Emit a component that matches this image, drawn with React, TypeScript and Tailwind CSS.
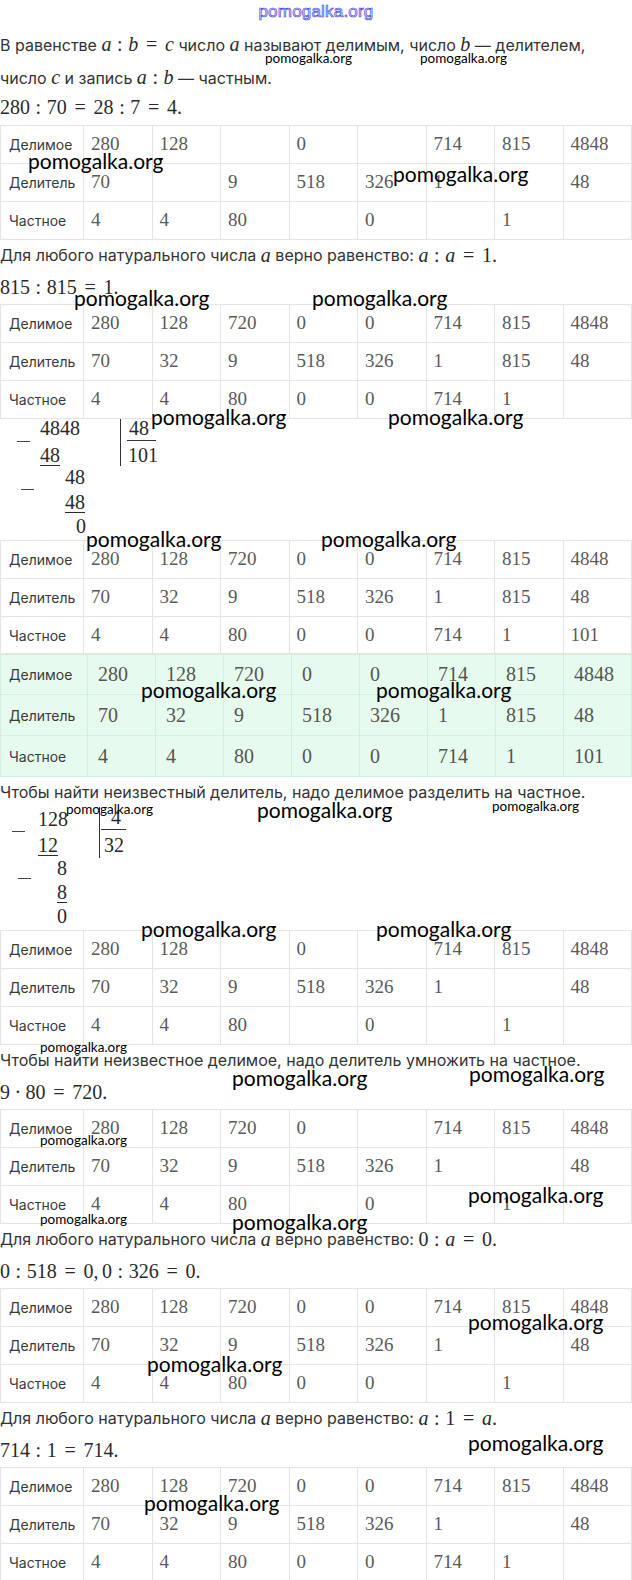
import React, { Fragment } from "react";

type Cell = string | null;

const LABELS = ["Делимое", "Делитель", "Частное"];

function Eq({ children }: { children: React.ReactNode }) {
  return (
    <span className="font-['Liberation_Serif',serif] text-[20px] text-[#2a2a2a] whitespace-nowrap">
      {children}
    </span>
  );
}

function V({ children }: { children: React.ReactNode }) {
  return <i className="italic">{children}</i>;
}

function Colon() {
  return <span className="inline-block mx-[0.28em]">:</span>;
}

function Equals() {
  return <span className="inline-block mx-[0.28em] w-[0.78em] text-center">=</span>;
}

function DataTable({ rows, green }: { rows: Cell[][]; green?: boolean }) {
  if (green) {
    return (
      <div className="-mt-[2px] grid grid-cols-[87px_repeat(8,minmax(0,1fr))] border-t border-l border-[#d4efdf] bg-[#e6fbee]">
        {rows.map((row, i) => (
          <Fragment key={i}>
            <div className="h-[41px] border-r border-b border-[#d4efdf] flex items-center pl-[8px] font-['Inter',sans-serif] text-[14px] text-[#3a3a3a]">
              {LABELS[i]}
            </div>
            {row.map((v, j) => (
              <div
                key={j}
                className="h-[41px] border-r border-b border-[#d4efdf] flex items-center pl-[10px] font-['Liberation_Serif',serif] text-[20px] text-[#555]"
              >
                {v}
              </div>
            ))}
          </Fragment>
        ))}
      </div>
    );
  }
  return (
    <div className="grid grid-cols-[83px_repeat(8,minmax(0,1fr))] border-t border-l border-[#e4e4e4]">
      {rows.map((row, i) => (
        <Fragment key={i}>
          <div className="h-[38px] border-r border-b border-[#e4e4e4] flex items-center pl-[8px] font-['Inter',sans-serif] text-[14px] text-[#3a3a3a]">
            {LABELS[i]}
          </div>
          {row.map((v, j) => (
            <div
              key={j}
              className="h-[38px] border-r border-b border-[#e4e4e4] flex items-center pl-[7px] font-['Liberation_Serif',serif] text-[19px] text-[#5a5a5a]"
            >
              {v}
            </div>
          ))}
        </Fragment>
      ))}
    </div>
  );
}

function TextLine({ children }: { children: React.ReactNode }) {
  return (
    <div className="h-[30px] flex items-center font-['Inter',sans-serif] text-[16px] text-[#333] whitespace-nowrap">
      {children}
    </div>
  );
}

function EqLine({ children }: { children: React.ReactNode }) {
  return (
    <div className="h-[34px] flex items-center">
      <Eq>{children}</Eq>
    </div>
  );
}

type Item = { x: number; y: number; t: string; u?: boolean };

function LongDivision({
  h,
  items,
  minus,
  bar,
  line,
}: {
  h: number;
  items: Item[];
  minus: { x: number; y: number }[];
  bar: { x: number; y0: number; y1: number };
  line: { x0: number; x1: number; y: number };
}) {
  return (
    <div className="relative font-['Liberation_Serif',serif] text-[20px] text-[#2a2a2a]" style={{ height: h }}>
      {items.map((it, i) => (
        <div
          key={i}
          className="absolute h-[24px] leading-[24px]"
          style={{ left: it.x, top: it.y - 12 }}
        >
          <span className={it.u ? "inline-block leading-[20px] border-b border-[#2a2a2a]" : "inline-block leading-[20px]"}>
            {it.t}
          </span>
        </div>
      ))}
      {minus.map((m, i) => (
        <div key={i} className="absolute h-[1px] w-[13px] bg-[#444]" style={{ left: m.x, top: m.y }} />
      ))}
      <div className="absolute w-[1px] bg-[#333]" style={{ left: bar.x, top: bar.y0, height: bar.y1 - bar.y0 }} />
      <div className="absolute h-[1px] bg-[#333]" style={{ left: line.x0, top: line.y, width: line.x1 - line.x0 }} />
    </div>
  );
}

const BIG: { x: number; y: number }[] = [
  { x: 28, y: 161 },
  { x: 393, y: 174 },
  { x: 74, y: 298 },
  { x: 312, y: 298 },
  { x: 151, y: 417 },
  { x: 388, y: 417 },
  { x: 86, y: 539 },
  { x: 321, y: 539 },
  { x: 141, y: 690 },
  { x: 376, y: 690 },
  { x: 257, y: 810 },
  { x: 141, y: 929 },
  { x: 376, y: 929 },
  { x: 232, y: 1078 },
  { x: 469, y: 1074 },
  { x: 468, y: 1195 },
  { x: 232, y: 1222 },
  { x: 468, y: 1322 },
  { x: 147, y: 1364 },
  { x: 468, y: 1443 },
  { x: 144, y: 1503 },
];

const SMALL: { x: number; y: number }[] = [
  { x: 265, y: 58 },
  { x: 420, y: 58 },
  { x: 66, y: 809 },
  { x: 492, y: 806 },
  { x: 40, y: 1047 },
  { x: 40, y: 1140 },
  { x: 40, y: 1219 },
];

const T1: Cell[][] = [
  ["280", "128", null, "0", null, "714", "815", "4848"],
  ["70", null, "9", "518", "326", "1", null, "48"],
  ["4", "4", "80", null, "0", null, "1", null],
];
const T2: Cell[][] = [
  ["280", "128", "720", "0", "0", "714", "815", "4848"],
  ["70", "32", "9", "518", "326", "1", "815", "48"],
  ["4", "4", "80", "0", "0", "714", "1", null],
];
const T3: Cell[][] = [
  ["280", "128", "720", "0", "0", "714", "815", "4848"],
  ["70", "32", "9", "518", "326", "1", "815", "48"],
  ["4", "4", "80", "0", "0", "714", "1", "101"],
];
const T5: Cell[][] = [
  ["280", "128", null, "0", null, "714", "815", "4848"],
  ["70", "32", "9", "518", "326", "1", null, "48"],
  ["4", "4", "80", null, "0", null, "1", null],
];
const T6: Cell[][] = [
  ["280", "128", "720", "0", null, "714", "815", "4848"],
  ["70", "32", "9", "518", "326", "1", null, "48"],
  ["4", "4", "80", null, "0", null, "1", null],
];
const T7: Cell[][] = [
  ["280", "128", "720", "0", "0", "714", "815", "4848"],
  ["70", "32", "9", "518", "326", "1", null, "48"],
  ["4", "4", "80", "0", "0", null, "1", null],
];
const T8: Cell[][] = [
  ["280", "128", "720", "0", "0", "714", "815", "4848"],
  ["70", "32", "9", "518", "326", "1", null, "48"],
  ["4", "4", "80", "0", "0", "714", "1", null],
];

export default function App() {
  return (
    <div className="relative w-[632px] bg-white overflow-hidden">
      <div className="h-[28px] flex items-start justify-center pt-[2px]">
        <span className="font-['Liberation_Sans',sans-serif] text-[17px] leading-[20px] text-[#e4e4ff] [-webkit-text-stroke:0.7px_#4b4be0] tracking-[0.2px]">
          pomogalka.org
        </span>
      </div>

      <p className="font-['Inter',sans-serif] text-[16px] leading-[32px] text-[#333] whitespace-nowrap">
        В равенстве{" "}
        <Eq>
          <V>a</V>
          <Colon />
          <V>b</V>
          <Equals />
          <V>c</V>
        </Eq>{" "}
        число <Eq><V>a</V></Eq> называют делимым, число <Eq><V>b</V></Eq> — делителем,
        <br />
        число <Eq><V>c</V></Eq> и запись{" "}
        <Eq>
          <V>a</V>
          <Colon />
          <V>b</V>
        </Eq>{" "}
        — частным.
      </p>

      <div className="h-[26px] flex items-center">
        <Eq>
          280<Colon />70<Equals />28<Colon />7<Equals />4.
        </Eq>
      </div>
      <div className="mt-[5px]">
        <DataTable rows={T1} />
      </div>

      <TextLine>
        Для любого натурального числа&nbsp;<Eq><V>a</V></Eq>&nbsp;верно равенство:&nbsp;
        <Eq>
          <V>a</V>
          <Colon />
          <V>a</V>
          <Equals />1.
        </Eq>
      </TextLine>
      <EqLine>
        815<Colon />815<Equals />1.
      </EqLine>
      <DataTable rows={T2} />

      <LongDivision
        h={121}
        items={[
          { x: 40, y: 9, t: "4848" },
          { x: 40, y: 36, t: "48", u: true },
          { x: 129, y: 9, t: "48" },
          { x: 128, y: 36, t: "101" },
          { x: 65, y: 58, t: "48" },
          { x: 65, y: 83, t: "48", u: true },
          { x: 76, y: 107, t: "0" },
        ]}
        minus={[
          { x: 17, y: 22 },
          { x: 21, y: 70 },
        ]}
        bar={{ x: 120, y0: 0, y1: 47 }}
        line={{ x0: 127, x1: 156, y: 21 }}
      />

      <DataTable rows={T3} />
      <DataTable rows={T3} green />

      <div className="h-[30px] flex items-center font-['Inter',sans-serif] text-[16px] text-[#333] whitespace-nowrap">
        Чтобы найти неизвестный делитель, надо делимое разделить на частное.
      </div>

      <LongDivision
        h={123}
        items={[
          { x: 38, y: 12, t: "128" },
          { x: 38, y: 38, t: "12", u: true },
          { x: 111, y: 10, t: "4" },
          { x: 104, y: 38, t: "32" },
          { x: 57, y: 61, t: "8" },
          { x: 57, y: 85, t: "8", u: true },
          { x: 57, y: 109, t: "0" },
        ]}
        minus={[
          { x: 12, y: 24 },
          { x: 18, y: 71 },
        ]}
        bar={{ x: 99, y0: 0, y1: 51 }}
        line={{ x0: 101, x1: 126, y: 22 }}
      />

      <DataTable rows={T5} />

      <TextLine>Чтобы найти неизвестное делимое, надо делитель умножить на частное.</TextLine>
      <EqLine>
        9<span className="inline-block mx-[0.22em]">·</span>80<Equals />720.
      </EqLine>
      <DataTable rows={T6} />

      <TextLine>
        Для любого натурального числа&nbsp;<Eq><V>a</V></Eq>&nbsp;верно равенство:&nbsp;
        <Eq>
          0<Colon />
          <V>a</V>
          <Equals />0.
        </Eq>
      </TextLine>
      <EqLine>
        0<Colon />518<Equals />0,<span className="inline-block w-[0.17em]" />0<Colon />326<Equals />0.
      </EqLine>
      <DataTable rows={T7} />

      <TextLine>
        Для любого натурального числа&nbsp;<Eq><V>a</V></Eq>&nbsp;верно равенство:&nbsp;
        <Eq>
          <V>a</V>
          <Colon />1<Equals />
          <V>a</V>.
        </Eq>
      </TextLine>
      <EqLine>
        714<Colon />1<Equals />714.
      </EqLine>
      <DataTable rows={T8} />

      {BIG.map((p, i) => (
        <div
          key={"b" + i}
          className="absolute -translate-y-1/2 font-['Lato',sans-serif] text-[21px] leading-[24px] text-black whitespace-nowrap pointer-events-none"
          style={{ left: p.x, top: p.y }}
        >
          pomogalka.org
        </div>
      ))}
      {SMALL.map((p, i) => (
        <div
          key={"s" + i}
          className="absolute -translate-y-1/2 font-['Lato',sans-serif] text-[13.5px] leading-[16px] text-black whitespace-nowrap pointer-events-none"
          style={{ left: p.x, top: p.y }}
        >
          pomogalka.org
        </div>
      ))}
    </div>
  );
}
